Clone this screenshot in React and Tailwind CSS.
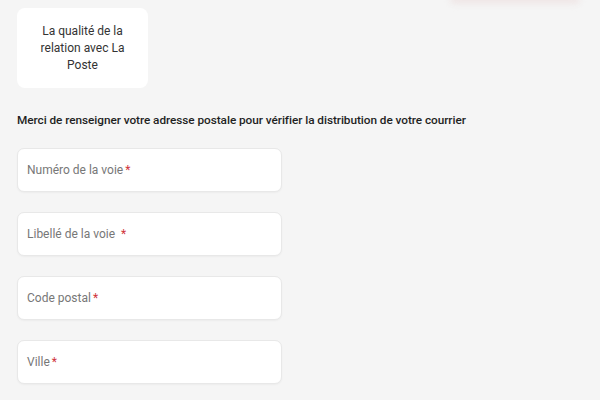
import React from "react";

const Field = ({ label, gap = false }) => (
  <div className="w-[265px] h-[44px] bg-white rounded-[7px] border border-[#e8e8e8] shadow-[0_1px_2px_rgba(0,0,0,0.04)] flex items-center px-[9px]">
    <span className="text-[12px] text-[#777]">
      {label}
      <span className={`text-[#d0343c] ${gap ? "ml-[6px]" : "ml-[2px]"}`}>*</span>
    </span>
  </div>
);

export default function App() {
  return (
    <div className="w-[600px] h-[400px] bg-[#f5f5f5] overflow-hidden relative font-['Roboto',sans-serif]">
      <div className="absolute left-[450px] top-[-6px] w-[130px] h-[10px] bg-[#efe6e6] rounded-[8px] blur-[3px]" />
      <div className="pt-[8px] pl-[17px]">
        <div className="w-[131px] h-[80px] bg-white rounded-[8px] flex items-center justify-center px-[8px]">
          <p className="text-[12px] leading-[17px] text-[#333] text-center">
            La qualité de la relation avec La Poste
          </p>
        </div>
        <p className="mt-[24px] text-[11.8px] leading-[16px] font-medium text-[#1f1f1f] tracking-[-0.05px]">
          Merci de renseigner votre adresse postale pour vérifier la distribution de votre courrier
        </p>
        <div className="mt-[20px] flex flex-col gap-[20px]">
          <Field label="Numéro de la voie" />
          <Field label="Libellé de la voie" gap />
          <Field label="Code postal" />
          <Field label="Ville" />
        </div>
      </div>
    </div>
  );
}
